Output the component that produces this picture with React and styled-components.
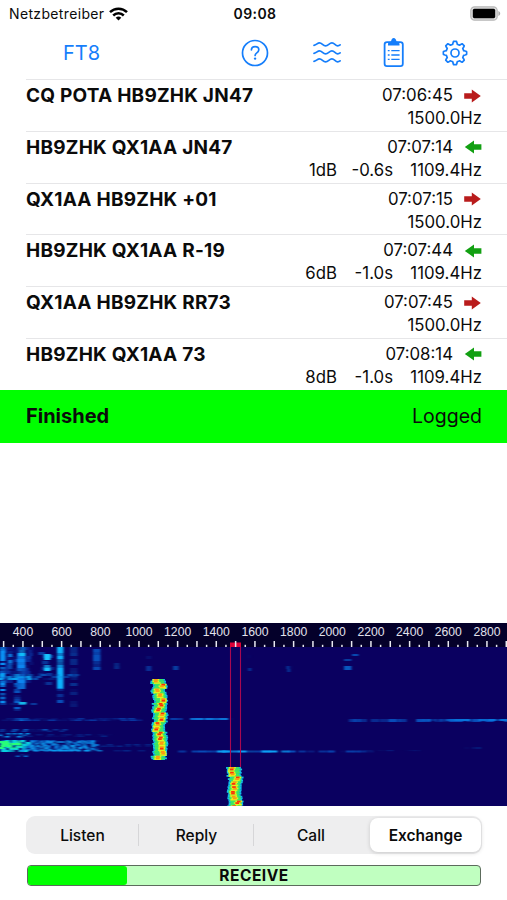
import React from "react";
import styled, { createGlobalStyle } from "styled-components";

const GlobalStyle = createGlobalStyle`
  body {
    margin: 0;
    background: #fff;
    color: #0b0b0b;
    font-family: "Inter", "Liberation Sans", sans-serif;
  }
  * {
    box-sizing: border-box;
  }
`;

const Screen = styled.div`
  width: 507px;
  height: 900px;
  display: flex;
  flex-direction: column;
  overflow: hidden;
`;

const StatusBar = styled.div`
  height: 27px;
  flex: none;
  display: grid;
  grid-template-columns: 1fr auto 1fr;
  align-items: center;
  padding: 0 6px 0 9px;
  font-size: 14px;
  line-height: 27px;
`;

const Carrier = styled.div`
  display: flex;
  align-items: center;
  gap: 5px;
  letter-spacing: 0.35px;
`;

const Clock = styled.div`
  font-weight: 600;
  letter-spacing: 0.4px;
`;

const BatteryBox = styled.div`
  display: flex;
  justify-content: flex-end;
`;

const NavBar = styled.div`
  height: 52px;
  flex: none;
  display: flex;
  align-items: center;
  padding: 0 39px 1px 63px;
  color: #157efb;
`;

const NavTitle = styled.div`
  font-size: 20px;
  line-height: 24px;
  width: 178px;
`;

const NavIcons = styled.div`
  flex: 1;
  display: grid;
  grid-template-columns: 72px 70px 59px 26px;
  align-items: center;
`;

const List = styled.div`
  flex: none;
  height: 310.5px;
  display: grid;
  grid-template-rows: repeat(6, 1fr);
`;

const Row = styled.div`
  margin-left: 26px;
  padding: 4px 25px 0 0;
  border-top: 1px solid #e6e6e8;
  display: flex;
  justify-content: space-between;
`;

const Message = styled.div`
  font-size: 19px;
  font-weight: 700;
  line-height: 24px;
  letter-spacing: 0.23px;
  white-space: nowrap;
`;

const Details = styled.div`
  display: flex;
  flex-direction: column;
  align-items: flex-end;
  font-size: 16.8px;
  line-height: 23px;
  white-space: nowrap;
`;

const TimeLine = styled.div`
  display: flex;
  align-items: center;
  gap: 11px;
`;

const StatLine = styled.div`
  display: flex;
`;

const Stat = styled.div`
  width: ${(props) => props.$width}px;
  text-align: right;
`;

const Banner = styled.div`
  flex: none;
  height: 53.5px;
  padding: 0 25px 0 26px;
  background: #00ff00;
  display: flex;
  align-items: center;
  justify-content: space-between;
  font-size: 19.5px;
`;

const BannerState = styled.div`
  font-size: 20px;
  font-weight: 700;
`;

const Gap = styled.div`
  flex: 1;
`;

const WaterfallBox = styled.div`
  flex: none;
  height: 183px;
  svg {
    display: block;
  }
`;

const Controls = styled.div`
  flex: none;
  height: 94px;
  padding: 10px 25px 0 26px;
`;

const Segments = styled.div`
  height: 38px;
  border-radius: 9px;
  background: #eeeeef;
  display: grid;
  grid-template-columns: 113px 115px 114px 1fr;
  padding: 2px 1px 2px 0;
`;

const Segment = styled.div`
  display: flex;
  align-items: center;
  justify-content: center;
  font-size: 15.5px;
  font-weight: 500;
  ${(props) =>
    props.$divider &&
    `
    background: linear-gradient(#d6d6d8, #d6d6d8) right center / 1px 22px no-repeat;
  `}
  ${(props) =>
    props.$active &&
    `
    background: #fff;
    border-radius: 8px;
    margin-left: 2px;
    font-weight: 600;
    box-shadow: 0 1px 4px rgba(0, 0, 0, 0.16);
  `}
`;

const Progress = styled.div`
  position: relative;
  height: 21px;
  margin: 11px 1px 0;
  border: 1px solid #5c6b5c;
  border-radius: 4px;
  background: #c0ffc0;
  overflow: hidden;
`;

const ProgressFill = styled.div`
  height: 100%;
  border-radius: 0 3px 3px 0;
  background: #00ff00;
`;

const ProgressLabel = styled.div`
  position: absolute;
  inset: 0;
  text-align: center;
  font-size: 15.5px;
  font-weight: 700;
  line-height: 20px;
  letter-spacing: 0.5px;
`;

const messages = [
  { text: "CQ POTA HB9ZHK JN47", time: "07:06:45", freq: "1500.0Hz" },
  { text: "HB9ZHK QX1AA JN47", time: "07:07:14", db: "1dB", dt: "-0.6s", freq: "1109.4Hz" },
  { text: "QX1AA HB9ZHK +01", time: "07:07:15", freq: "1500.0Hz" },
  { text: "HB9ZHK QX1AA R-19", time: "07:07:44", db: "6dB", dt: "-1.0s", freq: "1109.4Hz" },
  { text: "QX1AA HB9ZHK RR73", time: "07:07:45", freq: "1500.0Hz" },
  { text: "HB9ZHK QX1AA 73", time: "07:08:14", db: "8dB", dt: "-1.0s", freq: "1109.4Hz" },
];

const modes = ["Listen", "Reply", "Call", "Exchange"];

function WifiIcon() {
  return (
    <svg width="19" height="14" viewBox="0 0 19 14" fill="none" stroke="#000" strokeWidth="2.5">
      <path d="M1 5.1a12.2 12.2 0 0 1 17 0" />
      <path d="M4.2 8.5a7.6 7.6 0 0 1 10.6 0" />
      <path d="M9.5 13.6 6.7 10.8a4 4 0 0 1 5.6 0z" fill="#000" stroke="none" />
    </svg>
  );
}

function BatteryIcon() {
  return (
    <svg width="31" height="15" viewBox="0 0 31 15">
      <rect x="0.8" y="0.8" width="26.4" height="13.4" rx="3.8" fill="#dcdcdc" stroke="#b8b8b8" strokeWidth="1.2" />
      <rect x="2.8" y="2.8" width="22.4" height="9.4" rx="1.6" fill="#000" />
      <path d="M28.4 5v5c1.1-.4 1.8-1.4 1.8-2.5s-.7-2.1-1.8-2.5z" fill="#aaa" />
    </svg>
  );
}

function HelpIcon() {
  return (
    <svg width="28" height="28" viewBox="0 0 28 28" fill="none" stroke="currentColor" strokeWidth="1.7">
      <circle cx="14" cy="14" r="12.5" />
      <path d="M10.4 10.9c.1-2 1.6-3.3 3.7-3.3s3.7 1.3 3.7 3.2c0 1.5-.8 2.3-2 3.1s-1.7 1.3-1.7 2.6" strokeLinecap="round" />
      <circle cx="14.1" cy="19.6" r="1.2" fill="currentColor" stroke="none" />
    </svg>
  );
}

function WavesIcon() {
  return (
    <svg width="28" height="22" viewBox="0 0 28 22" fill="none" stroke="currentColor" strokeWidth="1.7" strokeLinecap="round">
      {[3.3, 11.3, 19.3].map((y) => (
        <path key={y} d={`M1 ${y}c2.8-.3 3.3-2.4 5.4-2.4 2.8 0 3.4 3 6.2 3s3.6-3 6.3-3 3.3 2.9 5.8 2.9c1 0 1.7-.3 2.4-.9`} />
      ))}
    </svg>
  );
}

function ClipboardIcon() {
  return (
    <svg width="22" height="30" viewBox="0 0 22 30" fill="none" stroke="currentColor">
      <rect x="1.6" y="4.2" width="18.2" height="24" rx="2.4" strokeWidth="1.8" />
      <path d="M5 7.4V6c0-1.6 1.4-2.3 3-2.6C8.4 1.3 9.2 0 10.7 0s2.4 1.3 2.8 3.4c1.6.3 3 1 3 2.6v1.4z" fill="currentColor" stroke="none" />
      <path d="M4.8 12.6h1.8M8.3 12.6h8.3M4.8 17h1.8M8.3 17h8.3M4.8 21.4h1.8M8.3 21.4h8.3" strokeWidth="1.3" />
    </svg>
  );
}

// outline of the cog, eight rounded teeth around a circle
function gearPath() {
  const points = [];
  for (let i = 0; i < 96; i++) {
    const a = (i / 96) * Math.PI * 2 - Math.PI / 2;
    const wave = Math.max(-1, Math.min(1, Math.cos(8 * (a + Math.PI / 2)) * 2));
    const r = 10.3 + wave * 1.35;
    points.push(`${(13 + r * Math.cos(a)).toFixed(2)} ${(13 + r * Math.sin(a)).toFixed(2)}`);
  }
  return `M${points.join("L")}z`;
}

function GearIcon() {
  return (
    <svg width="26" height="26" viewBox="0 0 26 26" fill="none" stroke="currentColor" strokeWidth="1.7" strokeLinejoin="round">
      <path d={gearPath()} />
      <circle cx="13" cy="13" r="4" />
    </svg>
  );
}

function ArrowIcon({ sent }) {
  return (
    <svg width="18" height="14" viewBox="0 0 18 14">
      {sent ? (
        <path d="M.2 4.2h7.6V.6L16.8 7l-9 6.4V9.8H.2z" fill="#b91c1c" />
      ) : (
        <path d="M17.4 4.2H10V.6L.8 7l9.2 6.4V9.8h7.4z" fill="#12a012" />
      )}
    </svg>
  );
}

function random(seed) {
  let s = seed;
  return () => {
    s = (s * 16807) % 2147483647;
    return s / 2147483647;
  };
}

const toX = (hz) => 23 + (hz - 400) * 0.19333;

// x, y, width, height, colour, strength, cell width, cell height
const noiseAreas = [
  [0, 24, 32, 36, "#0a3cae", 0.55, 4, 3],
  [0, 24, 5, 58, "#0a90f4", 1.1, 5, 2],
  [8, 28, 4, 24, "#0a74d8", 1, 4, 3],
  [17, 24, 8, 42, "#0c84f0", 1.1, 8, 3],
  [19, 24, 6, 9, "#12d0fc", 1.2, 6, 3],
  [14, 60, 6, 28, "#085cc8", 0.8, 6, 2],
  [40, 26, 12, 36, "#0850b8", 0.6, 6, 3],
  [44, 31, 6, 6, "#18c4ff", 1, 6, 3],
  [44, 31, 6, 6, "#18c4ff", 1.4, 6, 3],
  [44, 42, 6, 5, "#18c4ff", 1, 6, 3],
  [44, 42, 6, 5, "#18c4ff", 1.4, 6, 3],
  [57, 24, 6, 41, "#0cb0fc", 1.4, 6, 3],
  [57, 65, 6, 18, "#084cb8", 0.9, 6, 3],
  [70, 24, 7, 60, "#083c9c", 0.65, 7, 3],
  [93, 26, 7, 24, "#0850bc", 0.8, 7, 3],
  [114, 40, 5, 12, "#083090", 0.6, 5, 3],
  [0, 51, 28, 5, "#0aa0f0", 1.1, 5, 2],
  [28, 51, 46, 6, "#0850b4", 0.7, 5, 2],
  [0, 80, 32, 2, "#0a50b8", 0.7, 6, 2],
  [19, 79, 7, 2.5, "#16b8e8", 1.6, 7, 2.5],
  [0, 95, 140, 3, "#083ca8", 0.65, 7, 1.5],
  [14, 95, 16, 3, "#086cd0", 0.8, 4, 1.5],
  [0, 106, 64, 3, "#0858c0", 0.7, 5, 1.5],
  [0, 110, 26, 4, "#0888e0", 0.9, 4, 1.5],
  [26, 111, 80, 3, "#062c90", 0.5, 6, 1.5],
  [0, 117, 98, 10, "#0864c8", 0.75, 4, 2],
  [28, 118, 66, 10, "#10a0f0", 0.6, 4, 2],
  [0, 117, 25, 11, "#08d0e0", 1.1, 4, 2],
  [0, 118, 20, 8, "#28ff78", 1, 5, 2],
  [98, 121, 52, 2, "#063498", 0.5, 6, 1.5],
  [22, 127, 76, 1.5, "#0a9cf0", 0.9, 5, 1.5],
  [16, 131, 9, 2, "#0864c8", 0.8, 4, 1.5],
  [98, 127, 60, 1.5, "#062c90", 0.5, 7, 1.5],
  [168, 95, 60, 2, "#083ca8", 0.9, 7, 2],
  [188, 95, 38, 2, "#0c74d8", 1.1, 8, 2],
  [176, 127.5, 192, 2, "#084cb8", 0.85, 7, 2],
  [214, 127.5, 70, 2, "#0ca0f4", 1.2, 8, 2],
  [345, 96, 162, 3, "#084cb8", 0.85, 8, 3],
  [422, 96, 85, 2, "#0874dc", 1, 8, 2],
  [360, 127, 70, 1.2, "#062c90", 0.4, 7, 1.2],
  [146, 43, 5, 5, "#085cc8", 1.3, 5, 5],
  [146, 33, 5, 3, "#062c90", 1, 5, 3],
  [173, 43, 5, 4, "#083ca0", 1.3, 5, 4],
  [247, 32, 4, 3, "#062c90", 1, 4, 3],
  [248, 45, 3, 3, "#062c90", 1, 3, 3],
  [285, 43, 6, 5, "#062c90", 1, 3, 3],
  [344, 43, 7, 4, "#0858c0", 1.2, 7, 4],
  [344, 36, 7, 2, "#083ca0", 1.2, 7, 2],
  [352, 31, 6, 2, "#0848b0", 1.3, 6, 2],
  [465, 124, 15, 2, "#062080", 0.6, 5, 2],
];

function Noise() {
  const rnd = random(4711);
  const cells = [];
  noiseAreas.forEach(([x0, y0, w, h, color, strength, cw, ch]) => {
    for (let y = y0; y < y0 + h; y += ch) {
      for (let x = x0; x < x0 + w; x += cw) {
        const dx = cw < w ? (rnd() - 0.5) * cw : 0;
        const o = rnd() * 1.6 * strength - 0.14;
        if (o > 0.05) {
          cells.push(
            <rect key={cells.length} x={x + dx} y={y} width={cw + 0.5} height={ch} fill={color} opacity={Math.min(1, o).toFixed(2)} />
          );
        }
      }
    }
  });
  return <g filter="url(#haze)">{cells}</g>;
}

function Signal({ x, top, bottom, seed }) {
  const rnd = random(seed);
  const halo = [];
  const body = [];
  const core = [];
  let tone = 0;
  for (let y = top, i = 0; y < bottom; y += 1.6, i++) {
    const h = Math.min(1.8, bottom - y);
    if (i % 3 === 0) {
      tone = (rnd() - 0.5) * 6.5;
    }
    const left = x - 6 + tone * 0.3 - rnd() * 2.4;
    const right = x + 6 + tone * 0.3 + rnd() * 2.4;
    const mid = x + tone + (rnd() - 0.5) * 2;
    halo.push(<rect key={y} x={left} y={y} width={right - left} height={h} fill="#10c0e8" />);
    body.push(<rect key={y} x={left + 1.8} y={y} width={right - left - 3.6} height={h} fill="#3ce860" />);
    body.push(<rect key={`y${y}`} x={mid - 3.4} y={y} width="6.8" height={h} fill="#e4f01c" />);
    if (i % 3 !== 2) {
      core.push(<rect key={y} x={mid - 1.8} y={y} width="3.6" height={h} fill={rnd() > 0.4 ? "#ff3008" : "#ff9a10"} />);
    }
  }
  return (
    <g filter="url(#soften)">
      {halo}
      {body}
      {core}
    </g>
  );
}

function Waterfall() {
  const ticks = [];
  for (let hz = 300; hz <= 2900; hz += 50) {
    ticks.push(hz);
  }
  const labels = ticks.filter((hz) => hz % 200 === 0 && hz >= 400);
  return (
    <WaterfallBox>
      <svg width="507" height="183" viewBox="0 0 507 183">
        <defs>
          <filter id="soften" x="-5%" y="-5%" width="110%" height="110%" colorInterpolationFilters="sRGB">
            <feGaussianBlur stdDeviation="0.6" />
          </filter>
          <filter id="haze" x="-2%" y="-5%" width="104%" height="110%" colorInterpolationFilters="sRGB">
            <feGaussianBlur stdDeviation="0.9 0.6" />
          </filter>
        </defs>
        <rect width="507" height="183" fill="#0a0060" />
        <Noise />
        <path d="M230.5 24v120M240.5 24v120" stroke="#a80850" strokeWidth="1.1" />
        <Signal x={159.5} top={56} bottom={137} seed={77} />
        <Signal x={235} top={144} bottom={183} seed={911} />
        <rect width="507" height="24" fill="#04002a" />
        <rect x="230" y="19.5" width="11" height="4.5" fill="#dc0038" />
        {ticks.map((hz) => (
          <rect
            key={hz}
            x={toX(hz) - 0.8}
            y={hz % 100 === 0 ? 18 : 21.8}
            width="1.5"
            height={hz % 100 === 0 ? 6 : 2.2}
            fill="#e8e8f0"
          />
        ))}
        {labels.map((hz) => (
          <text
            key={hz}
            x={toX(hz)}
            y="13.4"
            fill="#e2e2ec"
            fontFamily="'Liberation Sans', Arial, sans-serif"
            fontSize="12.2"
            textAnchor="middle"
          >
            {hz}
          </text>
        ))}
      </svg>
    </WaterfallBox>
  );
}

function MessageRow({ item }) {
  return (
    <Row>
      <Message>{item.text}</Message>
      <Details>
        <TimeLine>
          {item.time}
          <ArrowIcon sent={!item.db} />
        </TimeLine>
        <StatLine>
          {item.db && <Stat $width={50}>{item.db}</Stat>}
          {item.dt && <Stat $width={56}>{item.dt}</Stat>}
          <Stat $width={89}>{item.freq}</Stat>
        </StatLine>
      </Details>
    </Row>
  );
}

export default function App() {
  return (
    <Screen>
      <GlobalStyle />
      <StatusBar>
        <Carrier>
          Netzbetreiber
          <WifiIcon />
        </Carrier>
        <Clock>09:08</Clock>
        <BatteryBox>
          <BatteryIcon />
        </BatteryBox>
      </StatusBar>
      <NavBar>
        <NavTitle>FT8</NavTitle>
        <NavIcons>
          <HelpIcon />
          <WavesIcon />
          <ClipboardIcon />
          <GearIcon />
        </NavIcons>
      </NavBar>
      <List>
        {messages.map((item) => (
          <MessageRow key={item.time} item={item} />
        ))}
      </List>
      <Banner>
        <BannerState>Finished</BannerState>
        <div>Logged</div>
      </Banner>
      <Gap />
      <Waterfall />
      <Controls>
        <Segments>
          {modes.map((mode, i) => (
            <Segment key={mode} $active={i === 3} $divider={i < 2}>
              {mode}
            </Segment>
          ))}
        </Segments>
        <Progress>
          <ProgressFill style={{ width: "21.8%" }} />
          <ProgressLabel>RECEIVE</ProgressLabel>
        </Progress>
      </Controls>
    </Screen>
  );
}
